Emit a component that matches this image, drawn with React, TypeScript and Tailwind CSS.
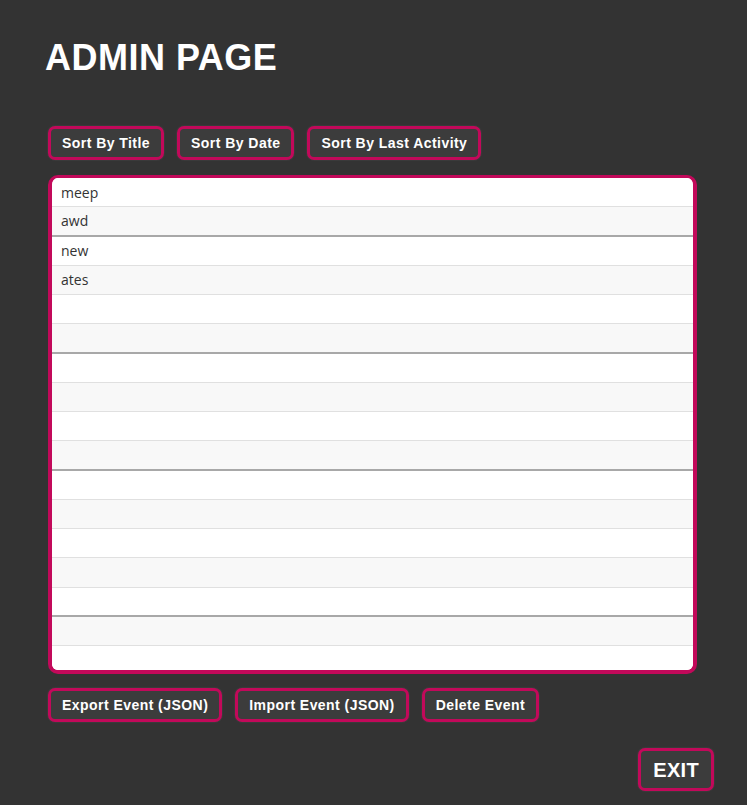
import React from "react";

const rows = [
  { label: "meep", dark: false },
  { label: "awd", dark: true },
  { label: "new", dark: false },
  { label: "ates", dark: false },
  { label: "", dark: false },
  { label: "", dark: true },
  { label: "", dark: false },
  { label: "", dark: false },
  { label: "", dark: false },
  { label: "", dark: true },
  { label: "", dark: false },
  { label: "", dark: false },
  { label: "", dark: false },
  { label: "", dark: false },
  { label: "", dark: true },
  { label: "", dark: false },
  { label: "", dark: false },
];

function Btn({ children, big = false }: { children: React.ReactNode; big?: boolean }) {
  return (
    <button
      className={`rounded-[7px] border-[3px] border-[#c2095a] bg-[#3c3c3c] font-bold text-white shadow-[0_0_0_1px_#3a3a3a] ${
        big
          ? "h-[43px] px-[12px] text-[20px] tracking-[0.3px]"
          : "h-[34px] px-[11px] text-[14px] tracking-[0.45px]"
      }`}
      style={{ fontFamily: '"Liberation Sans", Arial, sans-serif' }}
    >
      {children}
    </button>
  );
}

export default function App() {
  return (
    <div
      className="min-h-[805px] w-full bg-[#333333]"
      style={{ fontFamily: '"Liberation Sans", Arial, sans-serif' }}
    >
      <div className="pt-[37px] pl-[45px]">
        <h1 className="text-[36px] font-bold leading-[42px] tracking-[0.5px] text-white">ADMIN PAGE</h1>
      </div>

      {/* sort controls */}
      <div className="mt-[47px] flex gap-[13px] pl-[48px]">
        <Btn>Sort By Title</Btn>
        <Btn>Sort By Date</Btn>
        <Btn>Sort By Last Activity</Btn>
      </div>

      {/* event list */}
      <div className="ml-[48px] mt-[15px] h-[499px] w-[649px] overflow-hidden rounded-[10px] border-4 border-t-[3px] border-[#c2095a] bg-white">
        {rows.map((row, i) => (
          <div
            key={i}
            className={`flex h-[29.25px] items-center px-[9px] text-[14px] text-[#333] ${
              i % 2 === 1 ? "bg-[#f8f8f8]" : "bg-white"
            } ${row.dark ? "border-b-2 border-[#a8a8a8]" : "border-b border-[#e0e0e0]"}`}
            style={{ fontFamily: '"Open Sans", sans-serif' }}
          >
            {row.label}
          </div>
        ))}
      </div>

      {/* event actions */}
      <div className="mt-[14px] flex gap-[13px] pl-[48px]">
        <Btn>Export Event (JSON)</Btn>
        <Btn>Import Event (JSON)</Btn>
        <Btn>Delete Event</Btn>
      </div>

      <div className="mt-[26px] flex justify-end pr-[33px]">
        <Btn big>EXIT</Btn>
      </div>
    </div>
  );
}
